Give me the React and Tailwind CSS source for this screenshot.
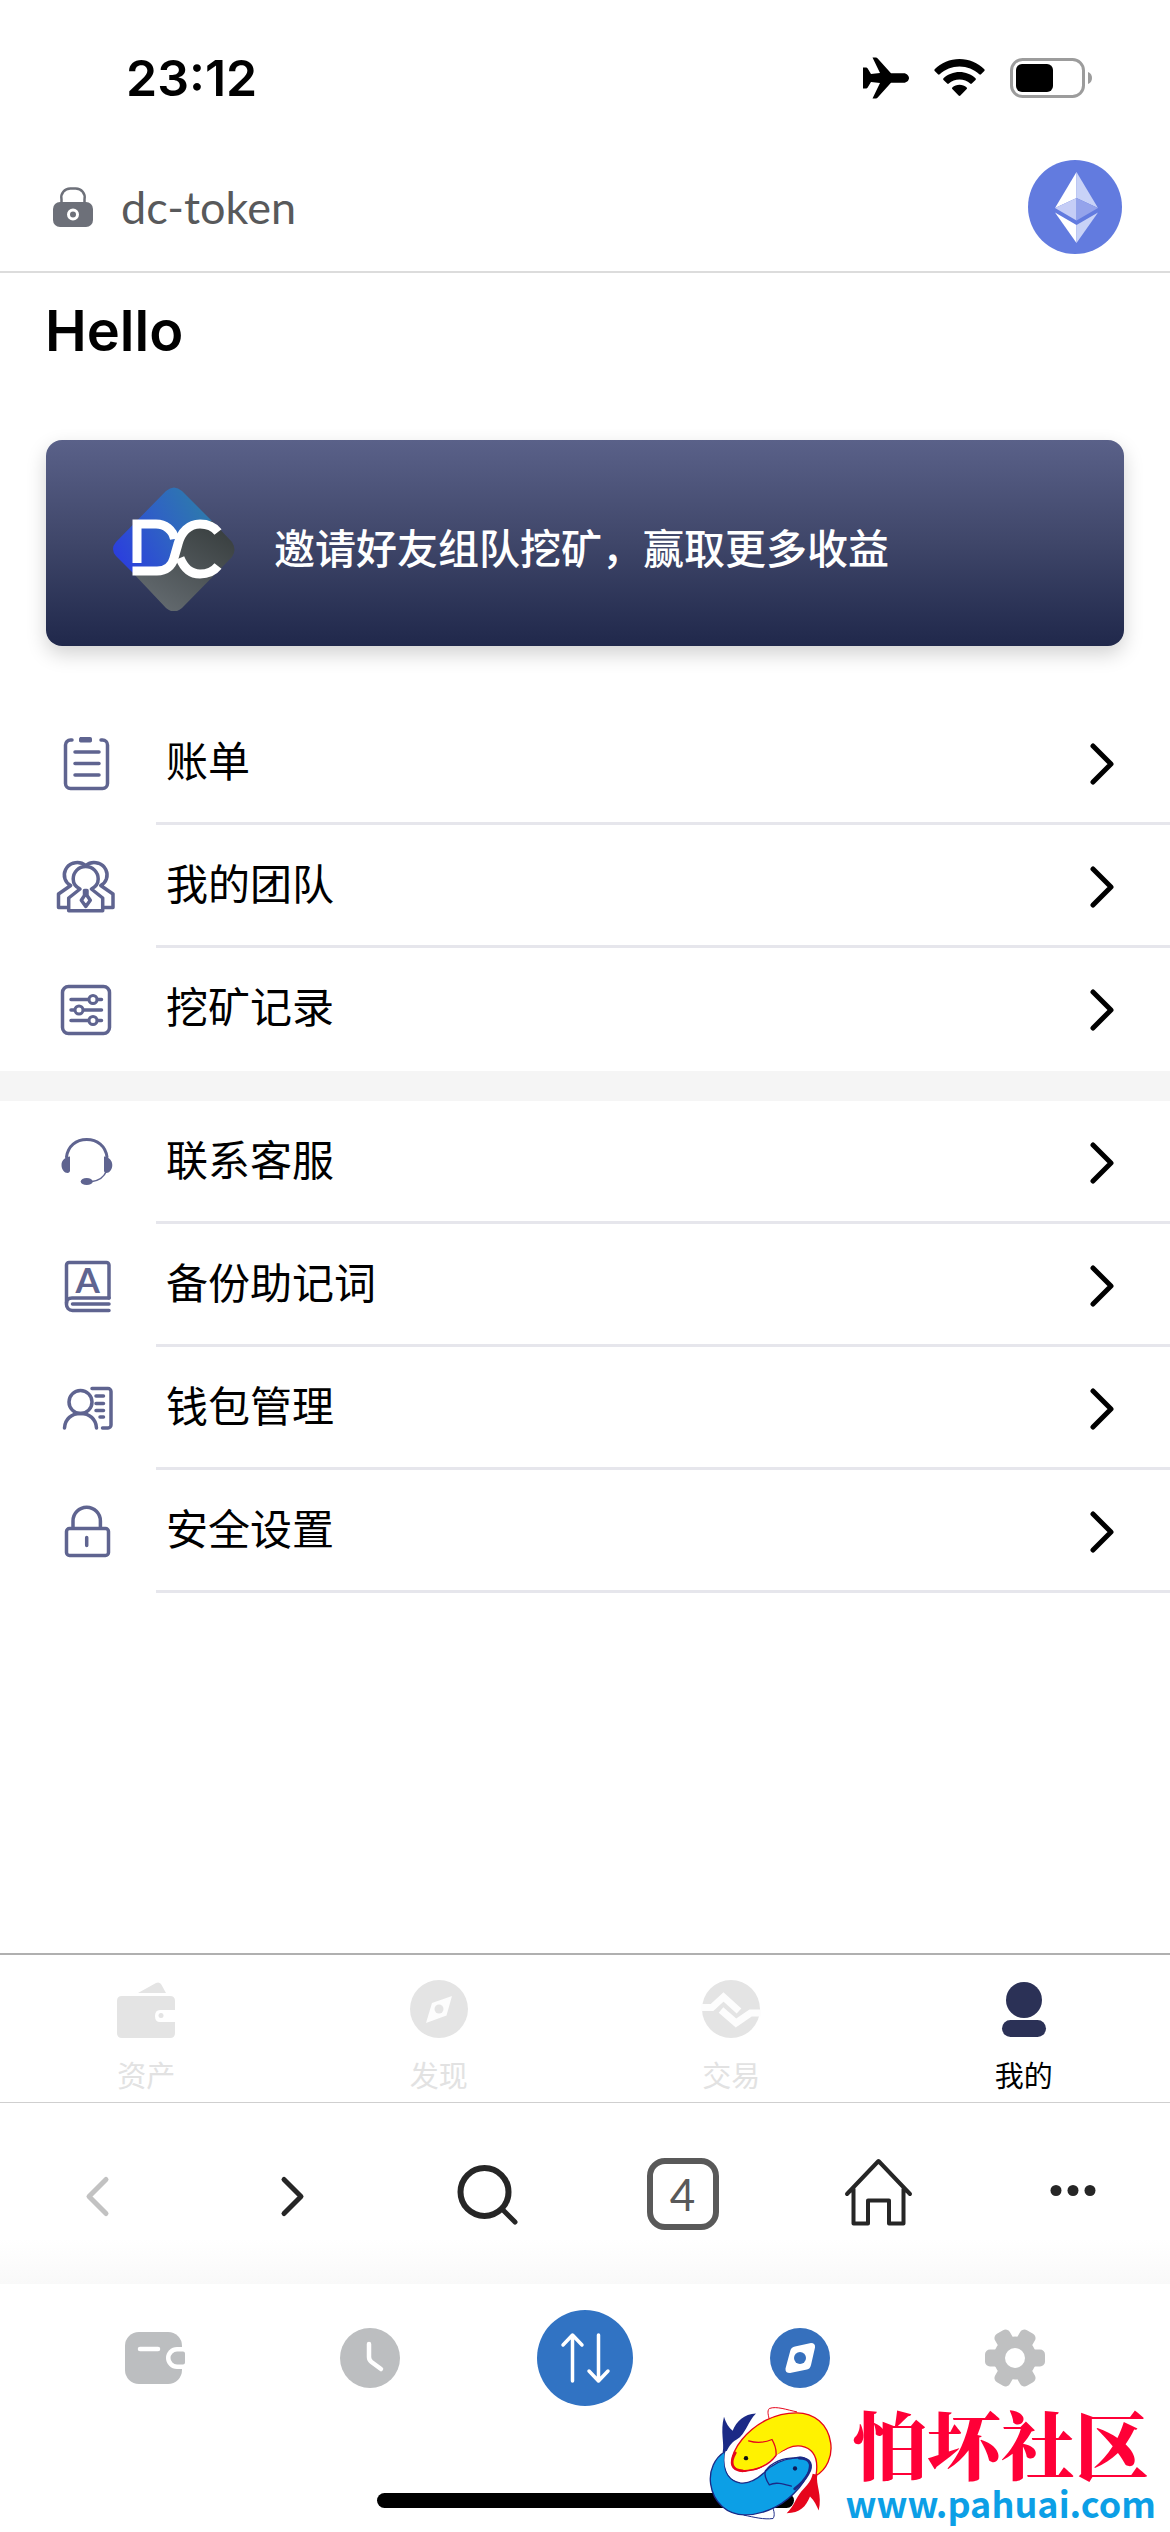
import React, { useState } from "react";

const INK = "#5f6490";

function LineIcon({ children }) {
  return (
    <svg
      viewBox="0 2 64 64"
      className="w-16 h-16 shrink-0"
      fill="none"
      stroke={INK}
      strokeWidth="3.500"
      strokeLinecap="round"
      strokeLinejoin="round"
      aria-hidden="true"
    >
      {children}
    </svg>
  );
}

const BillIcon = () => (
  <LineIcon>
    <path d="M18 10h-1.500a5 5 0 0 0-5 5v38.500a5 5 0 0 0 5 5h32a5 5 0 0 0 5-5V15a5 5 0 0 0-5-5H47" />
    <rect x="25.500" y="7.500" width="12" height="4.500" rx="1" fill={INK} strokeWidth="1" />
    <path d="M21 22h24M21 33.500h24M21 45h24" />
  </LineIcon>
);

const TeamIcon = () => (
  <LineIcon>
    <path d="M31.700 12.500C28 9.500 23 9 19 10.200 12 12.500 8.800 20 11 26c1 3 3 5 5.700 6.500L4.500 41v13.500h9" />
    <path d="M31.700 12.500c3.700-3 8.700-3.500 12.700-2.300 7 2.300 10.200 9.800 8 15.800-1 3-3 5-5.700 6.500L59 41v13.500h-9" />
    <path d="M14.700 57.700V45L26 36c-4-2-6.800-5.800-6.800-10 0-7 5.500-12.500 12.500-12.500S44.200 19 44.200 26c0 4.200-2.800 8-6.800 10l11.300 9v12.700z" />
    <path d="M30.500 37.500h2.500v5l3.300 4.700-4.500 6.300-4.500-6.300 3.200-4.700z" />
  </LineIcon>
);

const MiningIcon = () => (
  <LineIcon>
    <rect x="8.500" y="10.500" width="47" height="47" rx="6" />
    <path d="M17 23.500h17.500M43.500 23.500h4M17 34h3.500M29.500 34h18M17 44.500h17.500M43.500 44.500h4" />
    <circle cx="39" cy="23.500" r="4" strokeWidth="3" />
    <circle cx="25" cy="34" r="4" strokeWidth="3" />
    <circle cx="39" cy="44.500" r="4" strokeWidth="3" />
  </LineIcon>
);

const HeadsetIcon = () => (
  <LineIcon>
    <path d="M12.500 28C14 17 22 10.500 32.700 10.500S51.500 17 53 28" strokeWidth="3" />
    <path d="M16 27.500c-5 .5-8.500 4-8.500 8.500s3 8 6 8c1.500 0 2.500-1 2.500-2.500zM50 27.500c5 .5 8.300 4 8.300 8.500s-3 8-6 8c-1.500 0-2.300-1-2.300-2.500z" fill={INK} stroke="none" />
    <path d="M52.500 42c-2.500 6-7 9.500-14.500 10.500" strokeWidth="1.500" />
    <ellipse cx="32.700" cy="52.500" rx="6" ry="3.600" fill={INK} stroke="none" />
  </LineIcon>
);

const BookIcon = () => (
  <LineIcon>
    <path d="M55 46V13a2.500 2.500 0 0 0-2.500-2.500H15a2.500 2.500 0 0 0-2.500 2.500v39a6 6 0 0 0 6 6.500H55" />
    <path d="M55 46H18c-3.500 0-5.500 2-5.500 5M18.500 52H55" />
    <text
      x="33.700"
      y="40.500"
      textAnchor="middle"
      fontFamily="Lato, sans-serif"
      fontWeight="700"
      fontSize="35"
      fill={INK}
      stroke="none"
    >
      A
    </text>
  </LineIcon>
);

const ContactIcon = () => (
  <LineIcon>
    <circle cx="26.500" cy="27" r="11.500" />
    <path d="M10.500 53c.5-9 7-14.500 16-14.500S42 44 42.500 53" />
    <path d="M38 13.500h16a3 3 0 0 1 3 3V50a3 3 0 0 1-3 3h-5.500" />
    <path d="M42 21h7.500M42 28.500h7.500M42 35.500h7.500M46 42h3.500" />
  </LineIcon>
);

const LockIcon = () => (
  <LineIcon>
    <rect x="12.500" y="30.500" width="42" height="27" rx="3" />
    <path d="M19 30V23a13.700 13.700 0 0 1 27.400 0v7M32.700 39.500v8" />
  </LineIcon>
);

const groups = [
  [
    { label: "账单", Icon: BillIcon },
    { label: "我的团队", Icon: TeamIcon },
    { label: "挖矿记录", Icon: MiningIcon, last: true },
  ],
  [
    { label: "联系客服", Icon: HeadsetIcon },
    { label: "备份助记词", Icon: BookIcon },
    { label: "钱包管理", Icon: ContactIcon },
    { label: "安全设置", Icon: LockIcon },
  ],
];

function MenuRow({ label, Icon, last }) {
  return (
    <li className="pl-[54px]">
      <a href="#" className="flex items-center">
        <Icon />
        <span
          className={`ml-[38px] flex flex-1 items-center justify-between h-[123px] pl-[10px] pr-14 border-b-[3px] ${
            last ? "border-transparent" : "border-[#e6e6ec]"
          }`}
        >
          <span className="text-[42px] leading-[60px]">{label}</span>
          <svg viewBox="0 0 24 46" className="w-6 h-[46px]" fill="none" stroke="#000" strokeWidth="5" strokeLinecap="round" strokeLinejoin="round" aria-hidden="true">
            <path d="M3 7l18 18L3 43" />
          </svg>
        </span>
      </a>
    </li>
  );
}

function StatusBar() {
  return (
    <div className="flex items-center justify-between h-[156px] pl-[126px] pr-[78px]">
      <span className="font-[Inter,sans-serif] font-semibold text-[50px] leading-[60px]">23:12</span>
      <div className="flex items-center gap-[25px]">
        <svg viewBox="0 0 47 42" className="w-[47px] h-[42px]" aria-hidden="true">
          <path d="M1 10.500h3.200c.6 0 1 .3 1.300.8l3.500 5.700 9-.9L10.500.5h3.300c.8 0 1.400.3 1.900 1L29 16.200h12.500c3.500 0 5.500 2.800 5.500 4.800s-2 4.800-5.500 4.800H29L15.700 40.500c-.5.7-1.100 1-1.900 1h-3.300L18 25.900 9 25l-3.500 5.700c-.3.500-.7.800-1.300.8H1z" />
        </svg>
        <svg viewBox="0 0 51 38" className="w-[51px] h-[38px]" aria-hidden="true">
          <path d="M25.500 0C35 0 44 3.800 50.300 10.300c.5.500.5 1.200 0 1.700L47 15.300c-.5.500-1.200.5-1.700 0C40 10.300 33 7.500 25.500 7.500S11 10.300 5.700 15.300c-.5.500-1.200.5-1.700 0L.7 12c-.5-.5-.5-1.200 0-1.700C7 3.800 16 0 25.500 0z" />
          <path d="M25.500 13c6 0 11.700 2.300 16 6.200.5.500.5 1.200 0 1.700l-3.700 3.700c-.5.500-1.100.5-1.600 0-2.900-2.600-6.700-4-10.700-4s-7.800 1.400-10.700 4c-.5.500-1.100.5-1.600 0l-3.700-3.700c-.5-.5-.5-1.200 0-1.700C13.800 15.300 19.500 13 25.500 13z" />
          <path d="M25.500 25.800c2.700 0 5.200 1 7.200 2.600.5.500.5 1.100 0 1.600l-6.300 6.600c-.5.600-1.300.6-1.800 0L18.300 30c-.5-.5-.5-1.100 0-1.600 2-1.600 4.500-2.600 7.200-2.600z" />
        </svg>
        <svg viewBox="0 0 82 40" className="w-[82px] h-10" aria-hidden="true">
          <rect x="1.500" y="1.500" width="72" height="37" rx="11" fill="none" stroke="#9c9c9c" strokeWidth="3" />
          <rect x="6" y="6" width="37" height="28" rx="6" />
          <path d="M78 14c3 1 4 3.500 4 6s-1 5-4 6z" fill="#9c9c9c" />
        </svg>
      </div>
    </div>
  );
}

function AddressBar() {
  return (
    <header className="flex items-center justify-between h-[117px] pl-[53px] pr-12 pb-[14px] border-b-2 border-[#dcdcdc]">
      <div className="flex items-center gap-7">
        <svg viewBox="0 0 40 40" className="w-10 h-10" aria-hidden="true">
          <path d="M8.500 17v-4.500a9 9 0 0 1 9-11h5a9 9 0 0 1 9 11V17" fill="none" stroke="#6d7079" strokeWidth="2.500" />
          <rect y="15" width="40" height="25" rx="7" fill="#6d7079" />
          <circle cx="20" cy="27.500" r="4.500" fill="none" stroke="#fff" strokeWidth="3" />
        </svg>
        <span className="font-[Lato,sans-serif] text-[45px] leading-[56px] text-[#58595b]">dc-token</span>
      </div>
      <button type="button" aria-label="Ethereum">
        <svg viewBox="0 0 94 94" className="w-[94px] h-[94px]" aria-hidden="true">
          <circle cx="47" cy="47" r="47" fill="#627bdf" />
          <path d="M48.500 12L27 48l21.500-10z" fill="#fff" />
          <path d="M48.500 12L70 48 48.500 38z" fill="#c8d2f7" />
          <path d="M27 48l21.500-10v22.500z" fill="#c5cdf6" />
          <path d="M70 48L48.500 38v22.500z" fill="#94a3eb" />
          <path d="M27 52.500L48.500 65v18z" fill="#fff" />
          <path d="M70 52.500L48.500 65v18z" fill="#c8d2f7" />
        </svg>
      </button>
    </header>
  );
}

function DcLogo() {
  return (
    <svg viewBox="0 0 124 124" className="w-[124px] h-[124px] shrink-0" fill="none" aria-hidden="true">
      <defs>
        <linearGradient id="dcBlue" x1="0" y1="0.700" x2="1" y2="0.200">
          <stop offset="0" stopColor="#2b3fdd" />
          <stop offset="0.500" stopColor="#2f62c4" />
          <stop offset="1" stopColor="#2d7ea8" />
        </linearGradient>
        <linearGradient id="dcGray" x1="1" y1="0" x2="0.300" y2="1">
          <stop offset="0" stopColor="#343a3a" />
          <stop offset="1" stopColor="#636a6f" />
        </linearGradient>
      </defs>
      <path d="M54 4q8-7 16 0l32 32-33 25-10 29-38-4L4 69q-6-7 0-14z" fill="url(#dcBlue)" />
      <path d="M100 34l20 21q5 8 0 15l-50 51q-8 7-16 0L21 86l34-3 11-34 16-12z" fill="url(#dcGray)" />
      <path d="M25 76V37h19c9 0 17 6 18.500 15" stroke="#fff" strokeWidth="9" />
      <path d="M20.500 84H45c9 0 15-5 17-13l4-14c3-12 11-20 22-20 8 0 14 3 18 8" stroke="#fff" strokeWidth="9" />
      <path d="M68 71c4 10 10 16 20 16 8 0 14-3 18-8" stroke="#fff" strokeWidth="9" />
    </svg>
  );
}

const tabs = [
  {
    name: "资产",
    icon: (
      <>
        <path d="M22 14L40 4q3-1.500 5 1l5 9z" />
        <path d="M6 17h48q5 0 5 5v9H44q-5 0-5 6t5 6h15v11q0 5-5 5H6q-5 0-5-5V22q0-5 5-5z" />
        <circle cx="45" cy="36.500" r="2.500" />
      </>
    ),
  },
  {
    name: "发现",
    icon: (
      <>
        <circle cx="30" cy="30" r="29" />
        <path d="M43 17l-5.500 19.500L17 44l6-20z" fill="#fdfdfd" />
        <circle cx="30" cy="30" r="4.500" />
      </>
    ),
  },
  {
    name: "交易",
    icon: (
      <>
        <circle cx="30" cy="30" r="29" />
        <path d="M0 28.500h11L22.500 18 38 32M60 34H49.500L35 44 20 31" fill="none" stroke="#fdfdfd" strokeWidth="7" />
      </>
    ),
  },
  {
    name: "我的",
    icon: (
      <>
        <circle cx="30" cy="21" r="18" />
        <rect x="8" y="41" width="44" height="17" rx="8.500" />
      </>
    ),
  },
];

function TabBar({ active, onChange }) {
  return (
    <nav className="flex border-t-2 border-[#b0b0b0] border-b border-b-[#cfcfcf]">
      {tabs.map((tab) => (
        <button
          key={tab.name}
          type="button"
          onClick={() => onChange(tab.name)}
          className="flex flex-1 flex-col items-center gap-4 pt-6 pb-[3px]"
        >
          <svg viewBox="0 0 60 60" className="w-[60px] h-[60px]" fill={active === tab.name ? "#2b3156" : "#e4e4e4"} aria-hidden="true">
            {tab.icon}
          </svg>
          <span className={`text-[29px] leading-[44px] ${active === tab.name ? "text-black" : "text-[#e2e2e2]"}`}>
            {tab.name}
          </span>
        </button>
      ))}
    </nav>
  );
}

function ToolButton({ label, children }) {
  return (
    <button type="button" aria-label={label} className="flex flex-1 items-center justify-center">
      {children}
    </button>
  );
}

function BrowserToolbar() {
  const stroke = { fill: "none", strokeLinecap: "round", strokeLinejoin: "round", "aria-hidden": true };
  return (
    <div className="flex items-center h-[181px] bg-linear-to-b from-white from-75% to-[#f9f9f9]">
      <ToolButton label="Back">
        <svg viewBox="0 0 72 72" className="w-[72px] h-[72px]" stroke="#c2c2c2" strokeWidth="5" {...stroke}>
          <path d="M44 21.500L27 38.500l17 17" />
        </svg>
      </ToolButton>
      <ToolButton label="Forward">
        <svg viewBox="0 0 72 72" className="w-[72px] h-[72px]" stroke="#262626" strokeWidth="5" {...stroke}>
          <path d="M27 21.500l17 17-17 17" />
        </svg>
      </ToolButton>
      <ToolButton label="Search">
        <svg viewBox="0 0 72 72" className="w-[72px] h-[72px]" stroke="#262626" strokeWidth="6" {...stroke}>
          <circle cx="32.500" cy="34" r="24" />
          <path d="M51 52l12 12" strokeWidth="5" />
        </svg>
      </ToolButton>
      <ToolButton label="Tabs">
        <span className="flex items-center justify-center w-[72px] h-[72px] border-[6px] border-[#595959] rounded-[18px] font-[Lato,sans-serif] text-[44px] leading-none text-[#595959]">
          4
        </span>
      </ToolButton>
      <ToolButton label="Home">
        <svg viewBox="0 0 72 72" className="w-[72px] h-[72px]" stroke="#262626" strokeWidth="4" {...stroke}>
          <path d="M5 36L36.500 3 68 36M11.500 31v34.500H26v-23h21v23h14.500V31" />
        </svg>
      </ToolButton>
      <ToolButton label="More">
        <svg viewBox="0 0 72 72" className="w-[72px] h-[72px]" fill="#262626" aria-hidden="true">
          <circle cx="19" cy="32.500" r="5.500" />
          <circle cx="36" cy="32.500" r="5.500" />
          <circle cx="53" cy="32.500" r="5.500" />
        </svg>
      </ToolButton>
    </div>
  );
}

function AppNav() {
  return (
    <nav className="flex items-center h-[148px] px-12">
      <ToolButton label="Wallet">
        <svg viewBox="0 0 60 60" className="w-[60px] h-[60px]" aria-hidden="true">
          <rect y="4" width="57" height="52" rx="14" fill="#bcbec0" />
          <path d="M15 21h18" stroke="#fff" strokeWidth="4.500" strokeLinecap="round" />
          <path d="M60 19H52a11 11 0 0 0 0 22h8z" fill="#fff" />
          <path d="M58 23.500h-6a6.500 6.500 0 0 0 0 13h6q2 0 2-2v-9q0-2-2-2z" fill="#bcbec0" />
        </svg>
      </ToolButton>
      <ToolButton label="History">
        <svg viewBox="0 0 60 60" className="w-[60px] h-[60px]" aria-hidden="true">
          <circle cx="30" cy="30" r="30" fill="#bcbec0" />
          <path d="M29 16v13q0 3 2.500 5l9.500 7" fill="none" stroke="#fff" strokeWidth="4.500" strokeLinecap="round" />
        </svg>
      </ToolButton>
      <ToolButton label="Swap">
        <svg viewBox="0 0 96 96" className="w-24 h-24" fill="none" stroke="#fff" strokeWidth="3.500" strokeLinecap="round" strokeLinejoin="round" aria-hidden="true">
          <circle cx="48" cy="48" r="48" fill="#3173c3" stroke="none" />
          <path d="M35.500 71V26M26 35l9.500-10 9.500 10M61.500 25v45M52 61l9.500 10L71 61" />
        </svg>
      </ToolButton>
      <ToolButton label="Browser">
        <svg viewBox="0 0 60 60" className="w-[60px] h-[60px]" aria-hidden="true">
          <circle cx="30" cy="30" r="30" fill="#3670bd" />
          <path d="M25 18.500L41 15q4.500 0 4 4.500L41 37q-1 4-4 4.500L20 45q-5 0-4.500-4.500L20.500 22q1-3 4.500-3.500z" fill="#fff" />
          <circle cx="30" cy="30" r="6" fill="#3670bd" />
        </svg>
      </ToolButton>
      <ToolButton label="Settings">
        <svg viewBox="0 0 60 60" className="w-[60px] h-[60px]" fill="#bfc0c1" aria-hidden="true">
          <circle cx="30" cy="30" r="21.500" />
          <rect x="0" y="21.500" width="60" height="17" rx="5" />
          <rect x="0" y="21.500" width="60" height="17" rx="5" transform="rotate(60 30 30)" />
          <rect x="0" y="21.500" width="60" height="17" rx="5" transform="rotate(120 30 30)" />
          <circle cx="30" cy="30" r="10" fill="#fff" />
        </svg>
      </ToolButton>
    </nav>
  );
}

function Fish() {
  return (
    <svg viewBox="60 400 375 350" className="w-[125px] h-[117px] shrink-0" strokeLinejoin="round" strokeLinecap="round" aria-hidden="true">
      {/* blue fish: tail, fin, body */}
      <path d="M104 545c6-28-8-62 4-107 5 18 15 33 26 42 12-30 34-50 70-52-24 22-30 62-58 78-18 10-26 26-34 44z" fill="#1b2a86" />
      <path d="M168 733c30 6 60 14 87 10 6-8 4-22-2-36" fill="#fff" stroke="#1b2a86" strokeWidth="3" />
      <path
        d="M112 542C80 560 62 600 68 640c8 56 50 92 102 92 66 0 124-34 164-82 20-24 34-54 30-72-12-24-30-20-46-16-38 4-68 20-90 44-24 22-46 34-72 30-40-8-52-44-44-94z"
        fill="#0c9fe6"
        stroke="#1b2a86"
        strokeWidth="4"
      />
      {/* yellow fish: tail, fin, body */}
      <path d="M388 612c-6 28 16 62 4 107-8-18-12-28-26-42-12 30-30 50-70 50 24-22 30-54 52-74 18-18 22-28 26-44z" fill="#e6061c" />
      <path d="M326 423c-30-6-60-18-82-10-8 8-2 22 0 34" fill="#fff" stroke="#e6061c" strokeWidth="3" />
      <path
        d="M384 614c32-18 50-58 44-98-8-56-50-90-102-90-66 0-124 32-164 80-20 24-34 54-30 72 12 24 30 26 46 22 38-4 68-22 90-46 24-22 46-32 72-28 40 8 52 40 44 88z"
        fill="#fff200"
        stroke="#e6061c"
        strokeWidth="4"
      />
      {/* white channel between the two bodies */}
      <path d="M116 545c-8 42 6 76 36 82 30 4 54-14 78-38 26-24 52-50 96-54 28 0 46 22 46 62" fill="none" stroke="#fff" strokeWidth="9" />
      <path d="M340 562c-48-4-86 10-108 38-4 14 4 30 12 42 20-10 44-2 66 4" fill="none" stroke="#1b2a86" strokeWidth="4" />
      <path d="M334 562c34 0 42 22 26 48-10 18-24 32-40 44" fill="none" stroke="#1b2a86" strokeWidth="8" />
      <path d="M160 600c44 0 80-14 104-46 2-18-4-34-12-48-24 10-44 12-70 4" fill="none" stroke="#e6061c" strokeWidth="4" />
      <path d="M164 600c-36-2-38-26-22-54" fill="none" stroke="#e6061c" strokeWidth="8" />
      <circle cx="321" cy="593" r="6.500" fill="#101a55" />
      <circle cx="174" cy="562" r="6.500" fill="#111" />
    </svg>
  );
}

function CommunityBadge() {
  return (
    <a href="#" className="absolute right-[14px] bottom-[10px] flex items-center gap-3">
      <Fish />
      <span className="flex flex-col items-center">
        <span className="font-['Noto_Serif_CJK_SC','Noto_Sans_CJK_SC',serif] font-black text-[74px] leading-[80px] text-[#ff0037]">
          怕坏社区
        </span>
        <span className="font-['Noto_Sans_CJK_SC',sans-serif] font-bold text-[36px] leading-10 text-[#0c9fe6]">
          www.pahuai.com
        </span>
      </span>
    </a>
  );
}

export default function App() {
  const [active, setActive] = useState("我的");

  return (
    <div
      lang="zh-CN"
      className="relative flex flex-col min-h-screen bg-white text-black font-[Inter,'Noto_Sans_CJK_SC',sans-serif]"
    >
      <StatusBar />
      <AddressBar />

      <main className="flex-1 pt-[26px]">
        <h1 className="px-[45px] font-[Inter,sans-serif] font-semibold text-[56px] leading-[64px]">Hello</h1>

        <a
          href="#"
          className="flex items-center gap-[38px] mx-[46px] mt-[77px] h-[206px] pl-[66px] pt-3 rounded-2xl bg-linear-to-b from-[#5a6189] via-[#3f4669] to-[#20284b] shadow-[0_8px_20px_rgba(0,0,0,0.18)]"
        >
          <DcLogo />
          <span className="text-[41px] leading-[60px] font-medium text-white">
            邀请好友组队挖矿，赢取更多收益
          </span>
        </a>

        <div className="flex flex-col gap-[30px] mt-14 bg-[#f5f5f5]">
          {groups.map((rows, i) => (
            <ul key={i} className="bg-white">
              {rows.map((row) => (
                <MenuRow key={row.label} {...row} />
              ))}
            </ul>
          ))}
        </div>
      </main>

      <footer>
        <TabBar active={active} onChange={setActive} />
        <BrowserToolbar />
        <AppNav />
        <div className="mx-auto mt-[61px] mb-6 h-[15px] w-[417px] rounded-full bg-black" />
      </footer>

      <CommunityBadge />
    </div>
  );
}
